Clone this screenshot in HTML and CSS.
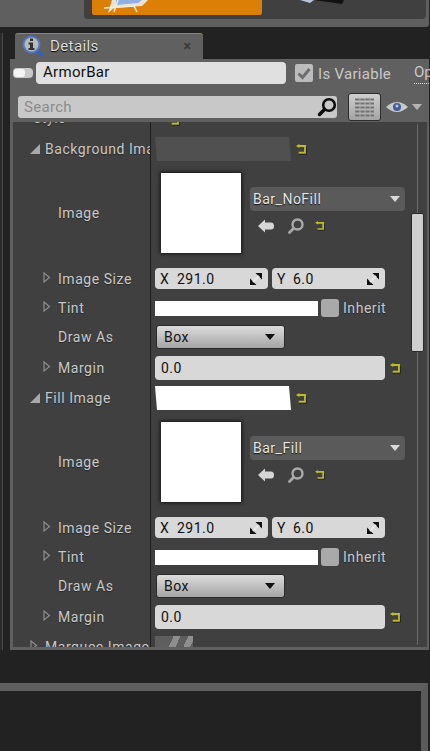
FILE: index.html
```html
<!DOCTYPE html>
<html lang="en">
<head>
    <meta charset="UTF-8">
    <title>Details - ArmorBar</title>
    <link rel="stylesheet" href="styles.css">
</head>
<body>

    <svg class="defs" width="0" height="0">
        <symbol id="reset" viewBox="0 0 10 10">
            <path d="M3 0 L0 1.800 L3 3.600 Z" fill="#bdbd26"/>
            <path d="M2 1.800 H8.200 V8 H2.500" fill="none" stroke="#bdbd26" stroke-width="1.700"/>
            <path d="M2.500 9.400 H9.500 V3" fill="none" stroke="#222" stroke-width=".8"/>
        </symbol>
        <symbol id="spin" viewBox="0 0 12 12">
            <path d="M5.500 0 H12 V6.500 Z M0 5.500 V12 H6.500 Z" fill="#111"/>
            <path d="M3 9 L9 3" stroke="#e8e8e8" stroke-width="2"/>
        </symbol>
        <symbol id="open" viewBox="0 0 8 11">
            <path d="M1 1 L6.500 5.500 L1 10 Z" fill="none" stroke="#8c8c8c" stroke-width="1.200"/>
        </symbol>
        <symbol id="shut" viewBox="0 0 10 10">
            <path d="M10 0 V10 H0 Z" fill="#a8a8a8"/>
        </symbol>
        <symbol id="back" viewBox="0 0 16 14">
            <path d="M0 7 L7 0.500 V3.500 H13 Q16 3.500 16 7 Q16 10.500 13 10.500 H7 V13.500 Z" fill="#d6d6d6"/>
        </symbol>
        <symbol id="glass" viewBox="0 0 16 16">
            <circle cx="9.500" cy="6.500" r="5" fill="none" stroke="#a8a8a8" stroke-width="2.400"/>
            <path d="M5.500 10.500 L1.500 14.500" stroke="#a8a8a8" stroke-width="2.800" stroke-linecap="round"/>
        </symbol>
    </svg>

    <div class="top-panel">
        <div class="top-inner">
            <div class="orange-btn">
                <svg class="frame-icon" width="44" height="13" viewBox="0 0 44 13">
                    <path d="M4 13 L8 0 H44 L38 6 L10 8 Z" fill="#e9e3d2"/>
                    <path d="M12 0 H38 L34 3 L12 5 Z" fill="#8fb0e0"/>
                    <path d="M0 8 L30 6 L33 12 M14 0 L10 12" fill="none" stroke="#f2ead8" stroke-width="1.500"/>
                </svg>
            </div>
            <svg class="dark-icon" width="44" height="4" viewBox="0 0 44 4">
                <path d="M0 0 H14 L10 3 Z" fill="#b8c4dc"/>
                <path d="M14 0 H44 L42 4 Z" fill="#111"/>
            </svg>
        </div>
    </div>

    <div class="middle">
        <div class="left-sliver"></div>

        <div class="details-wrap">
            <div class="tab">
                <svg class="tab-icon" width="22" height="22" viewBox="0 0 22 22">
                    <path d="M14 15 L21 21" stroke="#2f5fc0" stroke-width="3"/>
                    <circle cx="9.500" cy="9.500" r="8" fill="#b9b9b9" stroke="#4f78c8" stroke-width="2"/>
                    <rect x="8" y="3.500" width="3" height="2.500" fill="#333"/>
                    <path d="M6.500 7.500 H11 V13 H12.500 V15 H6.500 V13 H8 V9.500 H6.500 Z" fill="#333"/>
                </svg>
                <span class="tab-title">Details</span>
                <span class="tab-close">&times;</span>
            </div>

            <div class="panel">
                <div class="name-row">
                    <span class="pill-icon"><span></span></span>
                    <div class="name-input">ArmorBar</div>
                    <span class="var-check">
                        <svg width="14" height="13" viewBox="0 0 14 13"><path d="M1.500 6.500 L5.500 10.500 L12.500 2" fill="none" stroke="#6e6e6e" stroke-width="3"/></svg>
                    </span>
                    <span class="var-label">Is Variable</span>
                    <span class="op-link">Op</span>
                </div>

                <div class="search-row">
                    <div class="search-box">
                        <span>Search</span>
                        <svg width="20" height="20" viewBox="0 0 20 20">
                            <circle cx="12" cy="8" r="5.800" fill="none" stroke="#0c0c0c" stroke-width="2.600"/>
                            <path d="M7.500 12.500 L2.500 17.500" stroke="#0c0c0c" stroke-width="3.500" stroke-linecap="round"/>
                        </svg>
                    </div>
                    <div class="grid-btn">
                        <svg width="19" height="19" viewBox="0 0 19 19">
                            <path d="M0 1.500 H19 M0 5.500 H19 M0 9.500 H19 M0 13.500 H19 M0 17.500 H19" stroke="#727272" stroke-width="2.200"/>
                            <path d="M5 0 V19 M10 0 V19 M15 0 V19" stroke="#b0b0b0" stroke-width="1"/>
                        </svg>
                    </div>
                    <svg class="eye" width="36" height="14" viewBox="0 0 36 14">
                        <path d="M0 7 Q11 -3 22 7 Q11 17 0 7 Z" fill="#c8c8c8"/>
                        <circle cx="11" cy="7" r="4" fill="#3f5d98"/>
                        <circle cx="11" cy="6" r="1.500" fill="#b9c4dc"/>
                        <path d="M26 4 H36 L31 10 Z" fill="#b4b4b4"/>
                    </svg>
                </div>

                <div class="scroller">
                    <div class="track"></div>
                    <div class="thumb-bar"></div>

                    <div class="rows">
                        <div class="row row-style">
                            <div class="name lvl-0"><span class="lbl">Style</span></div>
                            <div class="value"><svg class="ico-reset"><use href="#reset"/></svg></div>
                        </div>

                        <div class="row row-head">
                            <div class="name lvl-1"><svg class="arrow"><use href="#shut"/></svg><span class="lbl">Background Image</span></div>
                            <div class="value">
                                <div class="slate-box"></div>
                                <svg class="ico-reset"><use href="#reset"/></svg>
                            </div>
                        </div>
                        <div class="row row-image">
                            <div class="name lvl-2"><span class="lbl">Image</span></div>
                            <div class="value">
                                <div class="thumb"></div>
                                <div class="asset">
                                    <div class="asset-combo"><span>Bar_NoFill</span><i class="combo-arrow"></i></div>
                                    <div class="asset-tools">
                                        <svg class="ico-back"><use href="#back"/></svg>
                                        <svg class="ico-glass"><use href="#glass"/></svg>
                                        <svg class="ico-reset"><use href="#reset"/></svg>
                                    </div>
                                </div>
                            </div>
                        </div>
                        <div class="row row-size">
                            <div class="name lvl-2"><svg class="expander"><use href="#open"/></svg><span class="lbl">Image Size</span></div>
                            <div class="value">
                                <div class="num-field"><b>X</b><span>291.0</span><svg class="ico-spin"><use href="#spin"/></svg></div>
                                <div class="num-field"><b>Y</b><span>6.0</span><svg class="ico-spin"><use href="#spin"/></svg></div>
                            </div>
                        </div>
                        <div class="row row-tint">
                            <div class="name lvl-2"><svg class="expander"><use href="#open"/></svg><span class="lbl">Tint</span></div>
                            <div class="value">
                                <div class="swatch"></div>
                                <span class="inherit-box"></span>
                                <span class="lbl inherit">Inherit</span>
                            </div>
                        </div>
                        <div class="row row-draw">
                            <div class="name lvl-2"><span class="lbl">Draw As</span></div>
                            <div class="value">
                                <div class="drop-btn"><span>Box</span><i class="drop-arrow"></i></div>
                            </div>
                        </div>
                        <div class="row row-margin">
                            <div class="name lvl-2"><svg class="expander"><use href="#open"/></svg><span class="lbl">Margin</span></div>
                            <div class="value">
                                <div class="margin-field">0.0</div>
                                <svg class="ico-reset"><use href="#reset"/></svg>
                            </div>
                        </div>

                        <div class="row row-head">
                            <div class="name lvl-1"><svg class="arrow"><use href="#shut"/></svg><span class="lbl">Fill Image</span></div>
                            <div class="value">
                                <div class="slate-box white"></div>
                                <svg class="ico-reset"><use href="#reset"/></svg>
                            </div>
                        </div>
                        <div class="row row-image">
                            <div class="name lvl-2"><span class="lbl">Image</span></div>
                            <div class="value">
                                <div class="thumb"></div>
                                <div class="asset">
                                    <div class="asset-combo"><span>Bar_Fill</span><i class="combo-arrow"></i></div>
                                    <div class="asset-tools">
                                        <svg class="ico-back"><use href="#back"/></svg>
                                        <svg class="ico-glass"><use href="#glass"/></svg>
                                        <svg class="ico-reset"><use href="#reset"/></svg>
                                    </div>
                                </div>
                            </div>
                        </div>
                        <div class="row row-size">
                            <div class="name lvl-2"><svg class="expander"><use href="#open"/></svg><span class="lbl">Image Size</span></div>
                            <div class="value">
                                <div class="num-field"><b>X</b><span>291.0</span><svg class="ico-spin"><use href="#spin"/></svg></div>
                                <div class="num-field"><b>Y</b><span>6.0</span><svg class="ico-spin"><use href="#spin"/></svg></div>
                            </div>
                        </div>
                        <div class="row row-tint">
                            <div class="name lvl-2"><svg class="expander"><use href="#open"/></svg><span class="lbl">Tint</span></div>
                            <div class="value">
                                <div class="swatch"></div>
                                <span class="inherit-box"></span>
                                <span class="lbl inherit">Inherit</span>
                            </div>
                        </div>
                        <div class="row row-draw">
                            <div class="name lvl-2"><span class="lbl">Draw As</span></div>
                            <div class="value">
                                <div class="drop-btn"><span>Box</span><i class="drop-arrow"></i></div>
                            </div>
                        </div>
                        <div class="row row-margin">
                            <div class="name lvl-2"><svg class="expander"><use href="#open"/></svg><span class="lbl">Margin</span></div>
                            <div class="value">
                                <div class="margin-field">0.0</div>
                                <svg class="ico-reset"><use href="#reset"/></svg>
                            </div>
                        </div>

                        <div class="row row-head">
                            <div class="name lvl-1"><svg class="expander"><use href="#open"/></svg><span class="lbl">Marquee Image</span></div>
                            <div class="value"><div class="stripes"></div></div>
                        </div>
                    </div>
                </div>
            </div>
        </div>
    </div>

    <div class="bottom-panel"></div>

</body>
</html>
```

FILE: styles.css
```css
* {
    box-sizing: border-box;
}

html, body {
    margin: 0;
    height: 751px;
    overflow: hidden;
}

body {
    width: 430px;
    background-color: #222222;
    font-family: "Roboto", "Liberation Sans", sans-serif;
    font-size: 14px;
    color: #c8c8c8;
}

.defs {
    position: absolute;
}

svg {
    display: block;
    flex: none;
}

/* top toolbar */
.top-panel {
    height: 27px;
    width: 429px;
    padding: 0 3px 8px 84px;
    background-color: #5f5f5f;
    border-radius: 0 0 3px 0;
}

.top-inner {
    height: 19px;
    padding-left: 8px;
    display: flex;
    align-items: flex-start;
    background-color: #404040;
    border-radius: 0 0 4px 4px;
}

.orange-btn {
    width: 170px;
    height: 15px;
    padding-left: 12px;
    background-color: #dc7f06;
    border-radius: 0 0 2px 2px;
}

.dark-icon {
    margin-left: 38px;
}

/* middle area */
.middle {
    display: flex;
    height: 617px;
    margin-top: 6px;
}

.left-sliver {
    width: 3px;
    margin-right: 7px;
    background-color: #2b2b2b;
    border-right: 1px solid #4a4a4a;
}

.details-wrap {
    width: 419px;
}

.tab {
    width: 188px;
    height: 26px;
    margin-left: 5px;
    padding: 0 0 2px 7px;
    display: flex;
    align-items: center;
    background-color: #606060;
    border-top: 1px solid #9a8a34;
    border-radius: 3px 3px 0 0;
}

.tab-title {
    margin-left: 6px;
    font-size: 15px;
    letter-spacing: 0.4px;
    color: #dedede;
    text-shadow: 0 1px 1px #000;
}

.tab-close {
    margin-left: auto;
    margin-right: 12px;
    font-size: 14px;
    font-weight: bold;
    color: #3a3a3a;
}

.panel {
    height: 591px;
    padding: 0 2px 3px 3px;
    display: flex;
    flex-direction: column;
    background-color: #606060;
}

.name-row {
    height: 28px;
    padding-top: 3px;
    display: flex;
    align-items: flex-start;
}

.name-row > * {
    flex: none;
}

.pill-icon {
    width: 20px;
    height: 10px;
    margin-top: 6px;
    padding: 1px 8px 1px 1px;
    background-color: #c9c9c9;
    border-radius: 4px;
}

.pill-icon span {
    display: block;
    height: 100%;
    background-color: #f4f4f4;
    border-radius: 3px;
}

.name-input {
    width: 250px;
    height: 22px;
    margin-left: 3px;
    padding-left: 7px;
    line-height: 21px;
    font-size: 15px;
    letter-spacing: 0.3px;
    color: #111111;
    background-color: #e0e0e0;
    border-radius: 4px;
}

.var-check {
    width: 18px;
    height: 18px;
    margin: 2px 0 0 9px;
    display: flex;
    align-items: center;
    justify-content: center;
    background-color: #bcbcbc;
    border-radius: 2px;
}

.var-label {
    width: 96px;
    margin: 2px 0 0 5px;
    line-height: 20px;
    font-size: 15px;
    letter-spacing: 0.3px;
    white-space: nowrap;
    color: #c8c8c8;
}

.op-link {
    line-height: 21px;
    font-size: 15px;
    color: #c8c8c8;
    border-bottom: 1px dotted #dddddd;
}

.search-row {
    height: 35px;
    padding: 3px 0 0 5px;
    display: flex;
    align-items: flex-start;
}

.search-box {
    width: 319px;
    height: 22px;
    margin-top: 6px;
    padding: 0 0 0 6px;
    display: flex;
    align-items: center;
    justify-content: space-between;
    font-size: 15px;
    letter-spacing: 0.3px;
    color: #8b8b8b;
    background-color: #c8c8c8;
    border-radius: 3px;
}

.grid-btn {
    width: 33px;
    height: 28px;
    margin: 3px 0 0 11px;
    display: flex;
    align-items: center;
    justify-content: center;
    background: linear-gradient(#cfcfcf, #a4a4a4);
    border: 1px solid #2c2c2c;
    border-radius: 3px;
}

.eye {
    margin: 10px 0 0 5px;
}

/* property rows */
.scroller {
    position: relative;
    flex: 1;
    min-height: 0;
    overflow: hidden;
    background-color: #404040;
}

.rows {
    margin-top: -20px;
}

.row {
    display: flex;
}

.row-style { height: 32px; }
.row-head { height: 30px; }
.row-image { height: 98px; }
.row-size { height: 33px; }
.row-tint { height: 26px; }
.row-draw { height: 32px; }
.row-margin { height: 30px; }

.name {
    width: 138px;
    height: 100%;
    flex: none;
    display: flex;
    align-items: center;
    overflow: hidden;
    white-space: nowrap;
    border-right: 1px solid #1e1e1e;
}

.lvl-0 { padding-left: 20px; }
.lvl-1 { padding-left: 17px; }
.lvl-2 { padding-left: 45px; }

.lvl-2 .expander {
    margin-left: -15px;
    margin-right: 7px;
}

.lvl-1 .expander {
    margin-right: 7px;
}

.lbl {
    font-size: 14px;
    letter-spacing: 0.55px;
    color: #c8c8c8;
    text-shadow: 0 1px 1px rgba(0, 0, 0, 0.4);
}

.arrow {
    width: 10px;
    height: 10px;
    margin-right: 5px;
}

.expander {
    width: 8px;
    height: 11px;
    margin-bottom: 3px;
}

.value {
    flex: 1;
    padding-left: 4px;
    display: flex;
    align-items: center;
}

.ico-reset {
    width: 11px;
    height: 11px;
}

.row-style .ico-reset {
    margin: 0 0 0 14px;
    position: relative;
    top: 2px;
}

.slate-box {
    width: 136px;
    height: 24px;
    margin-right: 5px;
    background-color: #505050;
    clip-path: polygon(0 0, 134px 0, 100% 100%, 2px 100%);
}

.slate-box.white {
    background-color: #ffffff;
}

.thumb {
    width: 80px;
    height: 80px;
    margin-left: 6px;
    background-color: #ffffff;
    box-shadow: 0 0 4px 1px rgba(0, 0, 0, 0.7);
}

.asset {
    margin-left: 9px;
    padding-top: 2px;
}

.asset-combo {
    width: 155px;
    height: 24px;
    padding: 0 5px 0 3px;
    display: flex;
    align-items: center;
    justify-content: space-between;
    font-size: 14px;
    letter-spacing: 0.5px;
    color: #e4e4e4;
    text-shadow: 0 1px 1px #111111;
    background-color: #5a5a5a;
    border-radius: 4px;
}

.combo-arrow {
    width: 0;
    height: 0;
    border-left: 5px solid transparent;
    border-right: 5px solid transparent;
    border-top: 6px solid #d8d8d8;
}

.asset-tools {
    height: 30px;
    padding-left: 8px;
    display: flex;
    align-items: center;
}

.ico-back {
    width: 16px;
    height: 14px;
}

.ico-glass {
    width: 16px;
    height: 16px;
    margin-left: 14px;
}

.asset-tools .ico-reset {
    margin-left: 11px;
    width: 10px;
    height: 10px;
}

.num-field {
    width: 113px;
    height: 21px;
    margin-right: 4px;
    padding: 0 6px 0 5px;
    display: flex;
    align-items: center;
    font-size: 14px;
    letter-spacing: 0.5px;
    color: #111111;
    background-color: #d8d8d8;
    border-radius: 4px;
}

.num-field b {
    width: 17px;
    font-weight: normal;
}

.num-field + .num-field b {
    width: 16px;
}

.ico-spin {
    width: 12px;
    height: 12px;
    margin-left: auto;
}

.swatch {
    width: 163px;
    height: 15px;
    background-color: #ffffff;
}

.inherit-box {
    width: 18px;
    height: 18px;
    margin-left: 3px;
    background-color: #a9a9a9;
    border-radius: 3px;
}

.inherit {
    margin-left: 4px;
}

.drop-btn {
    width: 129px;
    height: 24px;
    margin-left: 1px;
    padding: 0 9px 0 7px;
    display: flex;
    align-items: center;
    justify-content: space-between;
    font-size: 14px;
    letter-spacing: 0.5px;
    color: #111111;
    background: linear-gradient(#dcdcdc, #a4a4a4);
    border: 1px solid #2a2a2a;
    border-radius: 3px;
}

.drop-arrow {
    width: 0;
    height: 0;
    border-left: 5px solid transparent;
    border-right: 5px solid transparent;
    border-top: 6px solid #111111;
}

.margin-field {
    width: 230px;
    height: 24px;
    margin-right: 5px;
    padding-left: 6px;
    line-height: 24px;
    font-size: 14px;
    letter-spacing: 0.5px;
    color: #111111;
    background-color: #d8d8d8;
    border-radius: 4px;
}

.stripes {
    width: 38px;
    height: 24px;
    align-self: flex-start;
    margin-top: 4px;
    background: linear-gradient(115deg, #5e5e5e 0 38%, #8e8e8e 38% 52%, #5e5e5e 52% 68%, #8e8e8e 68% 82%, #5e5e5e 82%);
}

.track {
    position: absolute;
    top: 2px;
    bottom: 2px;
    left: 404px;
    width: 1px;
    background-color: #6a6a6a;
}

.thumb-bar {
    position: absolute;
    top: 91px;
    left: 398px;
    width: 13px;
    height: 139px;
    background-color: #cfcfcf;
    border: 1px solid #2a2a2a;
    border-radius: 2px;
}

/* bottom panel */
.bottom-panel {
    width: 428px;
    height: 68px;
    margin-top: 33px;
    background-color: #222222;
    border-top: 8px solid #5f5f5f;
    border-right: 7px solid #5a5a5a;
}
```
